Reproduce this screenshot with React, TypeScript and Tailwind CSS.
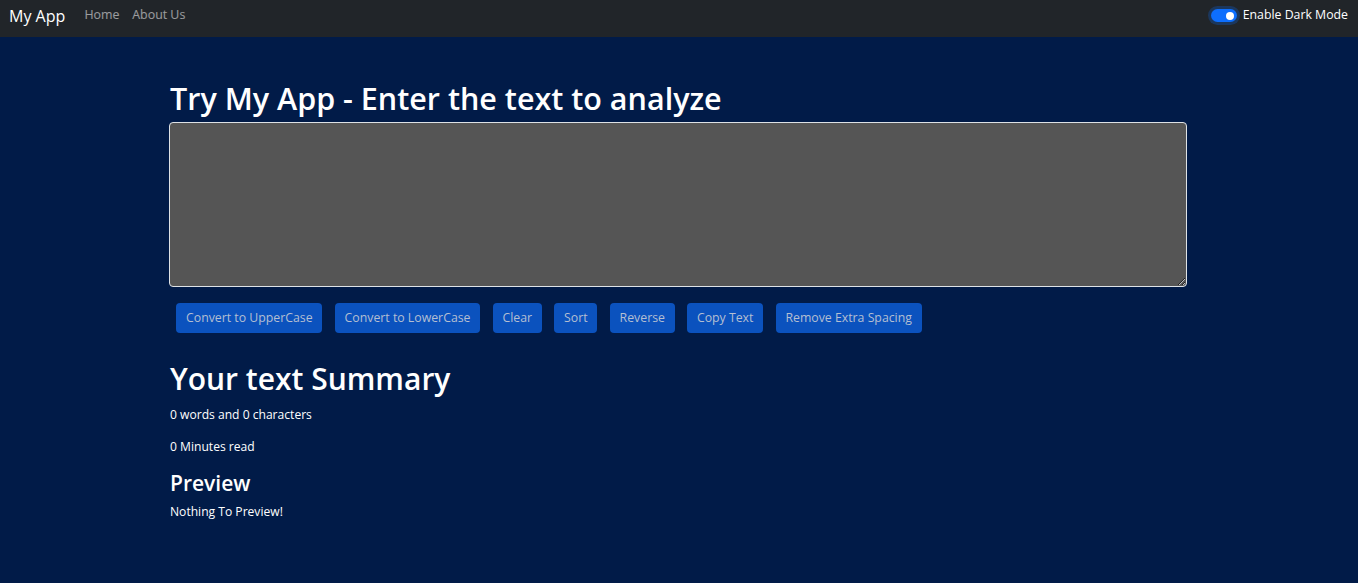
import React from "react";

export default function App() {
  const buttons = [
    "Convert to UpperCase",
    "Convert to LowerCase",
    "Clear",
    "Sort",
    "Reverse",
    "Copy Text",
    "Remove Extra Spacing",
  ];
  return (
    <div className="min-h-[583px] bg-[#011b48] font-['Open_Sans',sans-serif] text-white">
      <nav className="flex h-[37px] items-center bg-[#212529] pb-[6px] pl-[9px] pr-[10px]">
        <span className="mr-[12.8px] text-[16px] leading-none text-white">My App</span>
        <a className="px-[6.4px] text-[12.4px] text-white/55">Home</a>
        <a className="px-[6.4px] text-[12.4px] text-white/55">About Us</a>
        <div className="ml-auto flex items-center gap-[6px]">
          <span className="relative inline-block h-[13px] w-[26px] rounded-full bg-[#0d6efd] shadow-[0_0_0_3px_rgba(13,110,253,0.25)]">
            <span className="absolute right-[3px] top-[2.5px] h-[8px] w-[8px] rounded-full bg-white" />
          </span>
          <span className="text-[12.3px] text-white">Enable Dark Mode</span>
        </div>
      </nav>
      <div className="ml-[169px] w-[1018px] pt-[43px]">
        <h1 className="mb-[5px] pl-[1px] text-[30.5px] font-semibold leading-[1.2]">
          Try My App - Enter the text to analyze
        </h1>
        <textarea
          rows={8}
          className="block h-[165px] w-full resize-y rounded-[4px] border border-[#dee2e6] bg-[#555555] px-[9.6px] py-[4.8px] text-[12.8px] text-white outline-none"
        />
        <div className="mt-[13px] flex flex-wrap pl-[1px]">
          {buttons.map((b) => (
            <button
              key={b}
              className="mx-[6.4px] my-[3.2px] h-[30px] rounded-[4px] bg-[#0b52be] px-[9.6px] text-[12.3px] text-[#b4bfd2]"
            >
              {b}
            </button>
          ))}
        </div>
        <div className="pl-[1px]">
          <h1 className="mt-[25px] mb-[9px] text-[30px] font-semibold leading-[1.2]">Your text Summary</h1>
          <p className="mb-[14px] text-[12.1px] leading-[1.5]">0 words and 0 characters</p>
          <p className="mb-[15px] text-[12.1px] leading-[1.5]">0 Minutes read</p>
          <h2 className="mb-[7px] text-[21px] font-semibold leading-[1.2]">Preview</h2>
          <p className="text-[12.1px] leading-[1.5]">Nothing To Preview!</p>
        </div>
      </div>
    </div>
  );
}
